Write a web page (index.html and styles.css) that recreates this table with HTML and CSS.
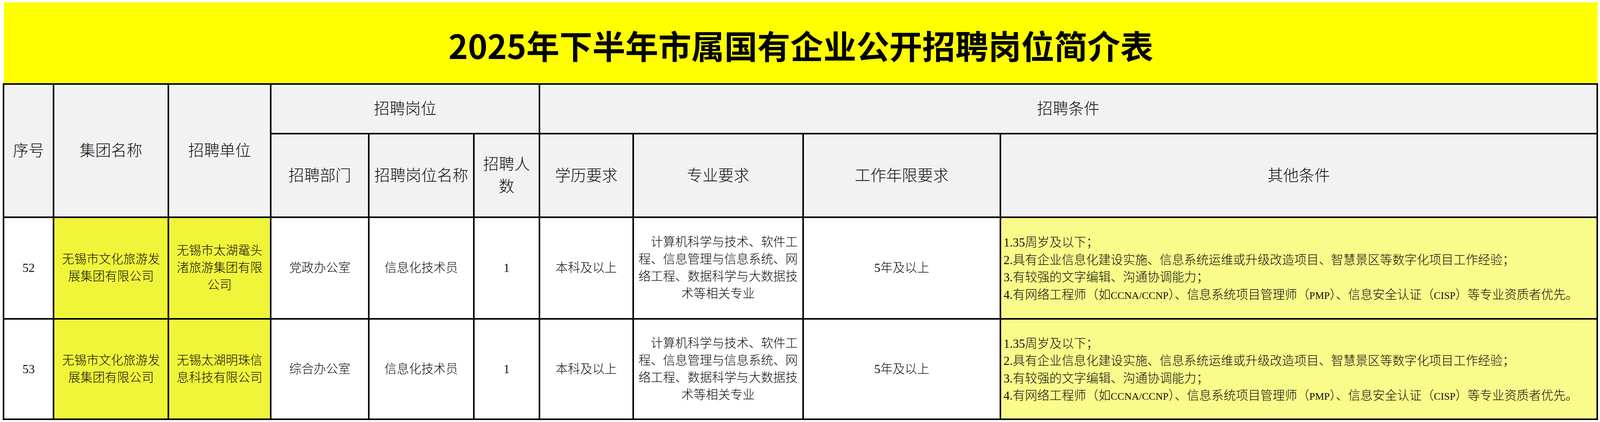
FILE: index.html
```html
<!DOCTYPE html>
<html lang="zh-CN">
<head>
<meta charset="utf-8">
<title>2025年下半年市属国有企业公开招聘岗位简介表</title>
<link rel="stylesheet" href="styles.css">
</head>
<body>
<div class="page">
  <div class="title">2025年下半年市属国有企业公开招聘岗位简介表</div>
  <div class="sheet">
    <div class="cell hdr r2">序号</div>
    <div class="cell hdr r2">集团名称</div>
    <div class="cell hdr r2">招聘单位</div>
    <div class="cell hdr c3">招聘岗位</div>
    <div class="cell hdr c4">招聘条件</div>
    <div class="cell hdr">招聘部门</div>
    <div class="cell hdr">招聘岗位名称</div>
    <div class="cell hdr">招聘人数</div>
    <div class="cell hdr">学历要求</div>
    <div class="cell hdr">专业要求</div>
    <div class="cell hdr">工作年限要求</div>
    <div class="cell hdr">其他条件</div>

    <div class="cell">52</div>
    <div class="cell yl">无锡市文化旅游发展集团有限公司</div>
    <div class="cell yl">无锡市太湖鼋头渚旅游集团有限公司</div>
    <div class="cell">党政办公室</div>
    <div class="cell">信息化技术员</div>
    <div class="cell">1</div>
    <div class="cell">本科及以上</div>
    <div class="cell major">　计算机科学与技术、软件工程、信息管理与信息系统、网络工程、数据科学与大数据技术等相关专业</div>
    <div class="cell">5年及以上</div>
    <div class="cell cond">
      <div class="lines">
        <div class="ln">1.35周岁及以下；</div>
        <div class="ln">2.具有企业信息化建设实施、信息系统运维或升级改造项目、智慧景区等数字化项目工作经验；</div>
        <div class="ln">3.有较强的文字编辑、沟通协调能力；</div>
        <div class="ln">4.有网络工程师（如<span class="en">CCNA/CCNP</span>）、信息系统项目管理师（<span class="en">PMP</span>）、信息安全认证（<span class="en">CISP</span>）等专业资质者优先。</div>
      </div>
    </div>

    <div class="cell">53</div>
    <div class="cell yl">无锡市文化旅游发展集团有限公司</div>
    <div class="cell yl">无锡太湖明珠信息科技有限公司</div>
    <div class="cell">综合办公室</div>
    <div class="cell">信息化技术员</div>
    <div class="cell">1</div>
    <div class="cell">本科及以上</div>
    <div class="cell major">　计算机科学与技术、软件工程、信息管理与信息系统、网络工程、数据科学与大数据技术等相关专业</div>
    <div class="cell">5年及以上</div>
    <div class="cell cond">
      <div class="lines">
        <div class="ln">1.35周岁及以下；</div>
        <div class="ln">2.具有企业信息化建设实施、信息系统运维或升级改造项目、智慧景区等数字化项目工作经验；</div>
        <div class="ln">3.有较强的文字编辑、沟通协调能力；</div>
        <div class="ln">4.有网络工程师（如<span class="en">CCNA/CCNP</span>）、信息系统项目管理师（<span class="en">PMP</span>）、信息安全认证（<span class="en">CISP</span>）等专业资质者优先。</div>
      </div>
    </div>
  </div>
</div>
</body>
</html>
```

FILE: styles.css
```css
/* Horizontal measures use --u, one hundredth of the viewport width
   (47.03px at the 4703px design width); vertical measures are in px. */
:root {
  --u: 1vw;
}

html, body {
  margin: 0;
  padding: 0;
  background: #ffffff;
  overflow: hidden;
}

.page {
  box-sizing: border-box;
  padding: 6px 0 0 calc(var(--u) * 0.17);
}

.title {
  margin-left: calc(var(--u) * 0.085);
  width: calc(var(--u) * 99.6);
  height: 207px;
  box-sizing: border-box;
  padding-top: 8px;
  background: #ffff00;
  display: flex;
  align-items: center;
  justify-content: center;
  font-family: "Noto Sans CJK SC", sans-serif;
  font-weight: 700;
  font-size: calc(var(--u) * 2.0625);
  color: #000000;
  white-space: nowrap;
}

.sheet {
  display: grid;
  width: calc(var(--u) * 99.7);
  box-sizing: border-box;
  grid-template-columns: 143fr 333fr 297fr 284fr 304fr 189fr 271fr 496fr 576fr 1752fr;
  grid-template-rows: 123px 210px 256px 253px;
  gap: 4px;
  padding: 4px;
  background: #000000;
  font-family: "Liberation Serif", "Noto Sans CJK SC", serif;
  font-weight: 300;
  color: #111111;
}

.cell {
  min-width: 0;
  background: #ffffff;
  display: flex;
  align-items: center;
  justify-content: center;
  text-align: center;
  box-sizing: border-box;
  padding: 0 calc(var(--u) * 0.17);
  font-size: calc(var(--u) * 0.7655);
  line-height: 44px;
  overflow: hidden;
}

.hdr {
  background: #f2f2f2;
  font-size: calc(var(--u) * 0.978);
  line-height: 57px;
}

.r2 {
  grid-row: span 2;
}

.c3 {
  grid-column: span 3;
}

.c4 {
  grid-column: span 4;
}

.yl {
  background: #f1f53a;
}

.cond {
  background: #f9fb8a;
  justify-content: flex-start;
  text-align: left;
  padding: 6px 0 0 calc(var(--u) * 0.149);
}

.lines {
  display: flex;
  flex-direction: column;
}

.ln {
  white-space: nowrap;
  line-height: 44.5px;
}

.en {
  font-size: calc(var(--u) * 0.638);
}
```
